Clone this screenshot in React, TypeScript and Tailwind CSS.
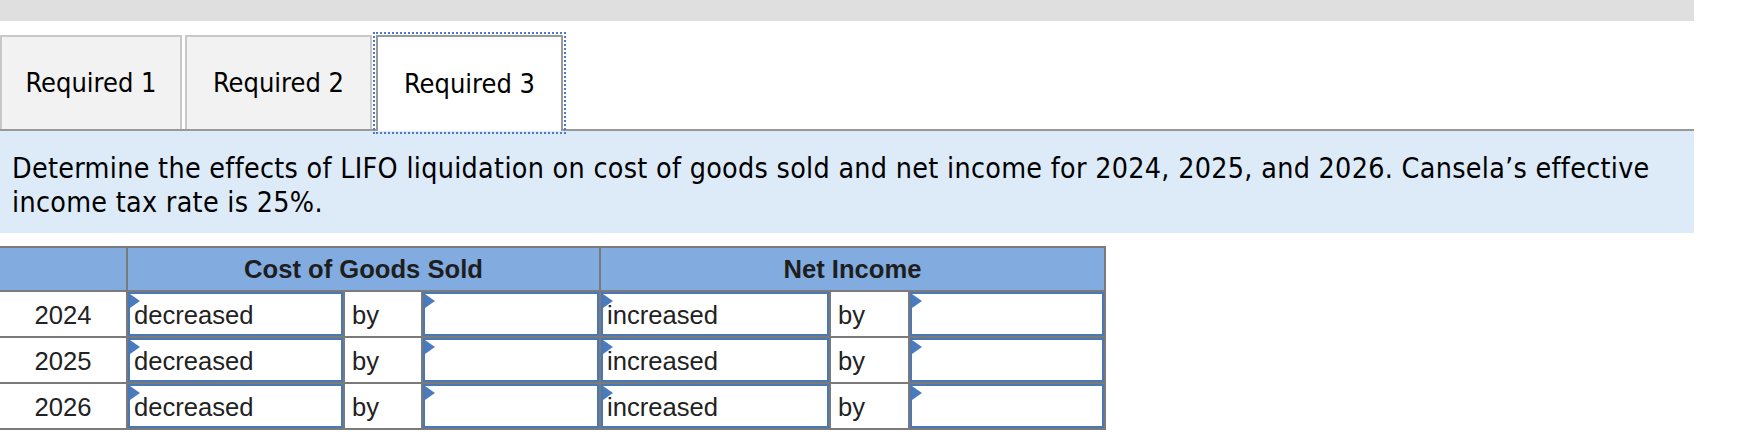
import React from 'react';

const tabFont = { fontFamily: '"DejaVu Sans Condensed", "DejaVu Sans", sans-serif' };

const years = ['2024', '2025', '2026'];

function Flag() {
  return (
    <svg className="absolute left-0 top-0" width="10" height="14" viewBox="0 0 10 14">
      <polygon points="0,0 10,7 0,14" fill="#4a7bbf" />
    </svg>
  );
}

function InputBox({ value }: { value?: string }) {
  return (
    <div className="relative h-[44px] border-2 border-[#4a78b5] bg-white flex items-center pl-[4px] pt-[2px] text-[25.6px] text-[#222]">
      <Flag />
      {value}
    </div>
  );
}

export default function App() {
  return (
    <div className="w-[1694px] bg-white" style={{ fontFamily: '"Liberation Sans", Arial, sans-serif' }}>
      <div className="h-[21px] bg-[#dfdfdf]" />

      {/* tabs */}
      <div className="mt-[14px] flex items-end border-b-2 border-[#999] h-[96px]" style={tabFont}>
        <div className="w-[182px] h-[94px] flex items-center justify-center border-2 border-b-0 border-[#c8c8c8] bg-[#f2f2f2] text-[27px] text-black">
          Required 1
        </div>
        <div className="ml-[3px] w-[187px] h-[94px] flex items-center justify-center border-2 border-b-0 border-[#c8c8c8] bg-[#f2f2f2] text-[27px] text-black">
          Required 2
        </div>
        <div className="ml-[4px] -mb-[2px] w-[187px] h-[96px] flex items-center justify-center border-2 border-b-0 border-[#999] bg-white text-[27px] text-black outline-2 outline-dotted outline-[#4a7bc4] outline-offset-[1px]">
          Required 3
        </div>
      </div>

      {/* question */}
      <div className="bg-[#ddeaf8] px-[12px] pt-[21px] pb-[13px] text-[28.4px] tracking-[0.3px] leading-[34px] text-black" style={tabFont}>
        Determine the effects of LIFO liquidation on cost of goods sold and net income for 2024, 2025, and 2026. Cansela’s effective income tax rate is 25%.
      </div>

      {/* table */}
      <table className="mt-[13px] border-collapse table-fixed text-[25.6px] text-[#222]">
        <colgroup>
          <col className="w-[127px]" />
          <col className="w-[217px]" />
          <col className="w-[78px]" />
          <col className="w-[178px]" />
          <col className="w-[230px]" />
          <col className="w-[79px]" />
          <col className="w-[196px]" />
        </colgroup>
        <thead>
          <tr className="bg-[#82abdf]">
            <th className="h-[44px] border-2 border-l-0 border-[#7a7a7a]" />
            <th colSpan={3} className="h-[44px] border-2 border-[#7a7a7a] font-bold text-[#1e1e1e]">
              Cost of Goods Sold
            </th>
            <th colSpan={3} className="h-[44px] border-2 border-[#7a7a7a] font-bold text-[#1e1e1e]">
              Net Income
            </th>
          </tr>
        </thead>
        <tbody>
          {years.map(y => (
            <tr key={y}>
              <td className="h-[44px] border-2 border-l-0 border-[#7a7a7a] text-center p-0 pt-[2px]">{y}</td>
              <td className="border-2 border-[#7a7a7a] p-0"><InputBox value="decreased" /></td>
              <td className="border-2 border-[#7a7a7a] p-0 pl-[7px] pt-[2px]">by</td>
              <td className="border-2 border-[#7a7a7a] p-0"><InputBox /></td>
              <td className="border-2 border-[#7a7a7a] p-0"><InputBox value="increased" /></td>
              <td className="border-2 border-[#7a7a7a] p-0 pl-[7px] pt-[2px]">by</td>
              <td className="border-2 border-[#7a7a7a] p-0"><InputBox /></td>
            </tr>
          ))}
        </tbody>
      </table>
    </div>
  );
}
